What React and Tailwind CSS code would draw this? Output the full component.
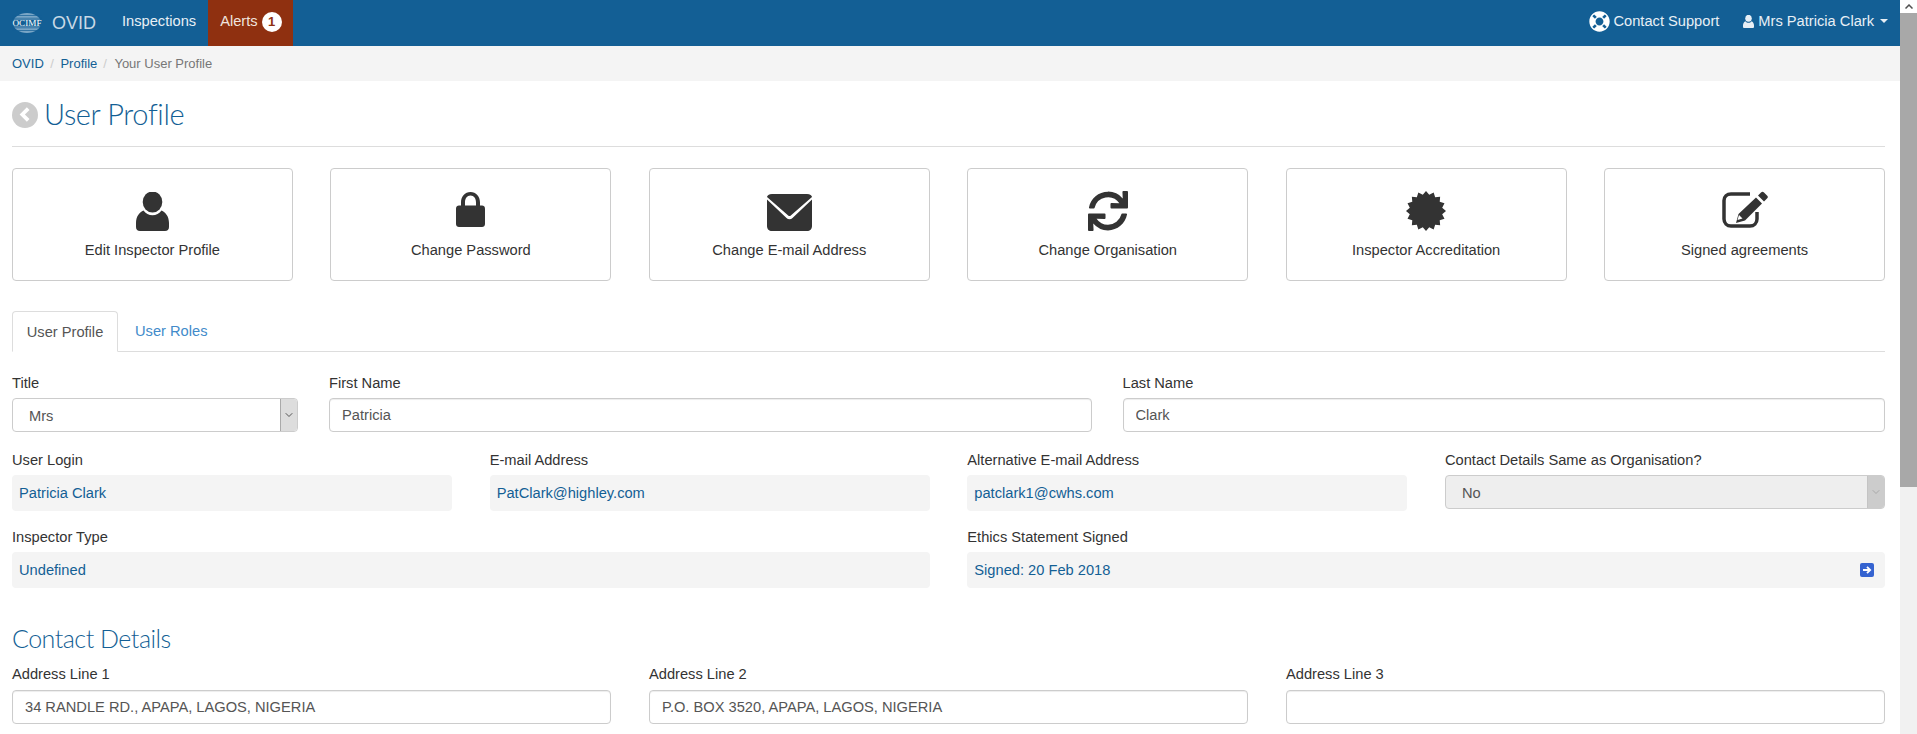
import { ChevronDown } from 'lucide-react';
import { FaLifeRing, FaSync } from 'react-icons/fa';

const UserIcon = ({ className }) => (
  <svg viewBox="0 0 33 39" className={className} fill="currentColor">
    <ellipse cx="16.5" cy="10" rx="9.8" ry="10.5" />
    <path d="M7.5 18.5c2 3 5.500 4.700 9 4.700s7-1.700 9-4.700c4 1.500 7.500 6 7.500 12.500v4c0 2.500-1.500 4-4 4H4c-2.500 0-4-1.500-4-4v-4c0-6.500 3.500-11 7.500-12.500z" />
  </svg>
);

const LockIcon = ({ className }) => (
  <svg viewBox="0 0 29 35" className={className} fill="currentColor">
    <path d="M3 13.500h23c1.700 0 3 1.200 3 3V32c0 1.700-1.300 3-3 3H3c-1.700 0-3-1.300-3-3V16.500c0-1.800 1.300-3 3-3z" />
    <path d="M5 15V10.500C5 4.500 9 0 14.500 0S24 4.500 24 10.500V15h-4V10.500C20 6.500 18 3.500 14.500 3.500S9 6.500 9 10.500V15z" />
  </svg>
);

const EnvelopeIcon = ({ className }) => (
  <svg viewBox="0 0 45 37" className={className} fill="currentColor">
    <path d="M0 5.500V32c0 3 2 5 5 5h35c3 0 5-2 5-5V5.500L25.500 24c-1.700 1.600-4.300 1.600-6 0z" />
    <path d="M5 0h35c3 0 5 1.500 5 3L23.800 21.500c-.8.700-1.800.700-2.600 0L0 3c0-1.500 2-3 5-3z" />
  </svg>
);

// 16 point seal, the teeth are worked out here rather than typed by hand
const sealPoints = Array.from({ length: 32 }, (_, i) => {
  const r = i % 2 === 0 ? 20 : 16.5;
  const a = (i * Math.PI) / 16;
  return `${20 + r * Math.sin(a)},${20 - r * Math.cos(a)}`;
}).join(' ');

const SealIcon = ({ className }) => (
  <svg viewBox="0 0 40 40" className={className} fill="currentColor">
    <polygon points={sealPoints} />
  </svg>
);

const EditIcon = ({ className }) => (
  <svg viewBox="0 0 46 37" className={className} fill="none">
    <path d="M28 3H9C5 3 2 5.500 2 9.500V28c0 4 3 7 7 7h19c4 0 7-3 7-7v-7" stroke="currentColor" strokeWidth="3.500" />
    <path d="M39 1.500a2 2 0 0 1 3 0l3 3a2 2 0 0 1 0 3l-3 3-6-6zM34 6.500l6 6-17 17-9 2.500 2.500-9z" fill="currentColor" />
    <path d="M17 24l-1.500 5 5-1.500z" fill="#fff" />
  </svg>
);

const OcimfLogo = () => (
  <svg viewBox="0 0 30 20" className="h-5 w-[30px]">
    <ellipse cx="15" cy="10" rx="14" ry="10" fill="#7aa6c6" />
    <path d="M0 2.500h30M0 5.200h30M0 14.800h30M0 17.500h30" stroke="#135f95" strokeWidth="0.700" />
    <rect x="0" y="6.500" width="30" height="7" fill="#135f95" />
    <text x="15" y="12.700" textAnchor="middle" fontSize="8.500" textLength="29" lengthAdjust="spacingAndGlyphs" fill="#fff" fontFamily="'Liberation Serif', serif">OCIMF</text>
  </svg>
);

const actions = [
  { label: 'Edit Inspector Profile', icon: <UserIcon className="h-[39px] w-[33px]" /> },
  { label: 'Change Password', icon: <LockIcon className="mb-1 h-[35px] w-[29px]" /> },
  { label: 'Change E-mail Address', icon: <EnvelopeIcon className="h-[37px] w-[45px]" /> },
  { label: 'Change Organisation', icon: <FaSync className="h-10 w-10" /> },
  { label: 'Inspector Accreditation', icon: <SealIcon className="h-10 w-10" /> },
  { label: 'Signed agreements', icon: <EditIcon className="mb-[3px] h-[37px] w-[46px]" /> },
];

const Label = ({ children }) => <label className="mb-[5.5px] block h-5 leading-5 text-[#333]">{children}</label>;

const TextField = ({ label, value }) => (
  <div>
    <Label>{label}</Label>
    <input
      readOnly
      value={value}
      className="h-[34px] w-full rounded border border-[#ccc] bg-white px-3 text-[#555] shadow-[inset_0_1px_1px_rgba(0,0,0,0.075)] outline-none"
    />
  </div>
);

const ReadOnlyField = ({ label, value, className, children }) => (
  <div className={className}>
    <Label>{label}</Label>
    <div className="flex h-9 items-center justify-between rounded bg-[#f4f4f4] pr-[11px] pl-[7px] text-[#135f95]">
      <span>{value}</span>
      {children}
    </div>
  </div>
);

const SelectField = ({ label, value, disabled }) => (
  <div>
    <Label>{label}</Label>
    <div className={`flex h-[34px] items-stretch overflow-hidden rounded border border-[#ccc] ${disabled ? 'bg-[#eee]' : 'bg-white'}`}>
      <span className="flex-1 pt-[6px] pl-[16px] text-[#555]">{value}</span>
      <span className={`flex w-[17px] items-center justify-center border-l ${disabled ? 'border-[#c4c4c4] bg-[#ccc] text-[#aaa]' : 'border-[#aaa] bg-[#ddd] text-[#555]'}`}>
        <ChevronDown size={12} />
      </span>
    </div>
  </div>
);

export default function App() {
  return (
    <div className="flex h-[734px] overflow-hidden bg-white text-[14.67px] [font-family:'Liberation_Sans',Arial,sans-serif]">
      <div className="min-w-0 flex-1">
        <header className="flex h-[46px] items-center justify-between bg-[#135f95] text-[#e8eff5]">
          <div className="flex h-full items-center">
            <div className="ml-3 flex items-center gap-[10px]">
              <OcimfLogo />
              <span className="text-[18px] text-[#c9d9e5]">OVID</span>
            </div>
            <a className="ml-[26px] -translate-y-[2px]">Inspections</a>
            <a className="ml-3 flex h-full items-center gap-1 bg-[#8f3010] pr-[11px] pl-3 text-[#f0e4df]">
              <span className="-translate-y-[2px]">Alerts</span>
              <span className="flex h-5 w-5 -translate-y-px items-center justify-center rounded-full bg-white text-[13px] font-bold text-[#8f3010]">1</span>
            </a>
          </div>
          <div className="flex -translate-y-[2px] items-center pr-[12px]">
            <a className="flex items-center gap-[3px]">
              <FaLifeRing className="h-[21px] w-[21px] text-white" />
              Contact Support
            </a>
            <a className="ml-[24px] flex items-center gap-1">
              <UserIcon className="h-[13px] w-[11px]" />
              Mrs Patricia Clark
              <span className="ml-[2px] h-0 w-0 border-x-4 border-t-4 border-x-transparent border-t-[#e8eff5]" />
            </a>
          </div>
        </header>

        <nav className="flex h-[35px] items-center bg-[#f4f4f4] pl-3 text-[13px]">
          <a className="text-[#135f95]">OVID</a>
          <span className="px-[6.5px] text-[#ccc]">/</span>
          <a className="text-[#135f95]">Profile</a>
          <span className="px-[6px] text-[#ccc]">/</span>
          <span className="pl-[1.5px] text-[#777]">Your User Profile</span>
        </nav>

        <main className="pr-[15px] pl-3">
          <div className="flex h-[66px] items-center gap-[6px] border-b border-[#ddd] pt-[2px]">
            <span className="flex h-[26px] w-[26px] items-center justify-center rounded-full bg-[#ccc]">
              <svg viewBox="0 0 14 14" className="h-[15px] w-[15px]" fill="none" stroke="#fff" strokeWidth="3.500">
                <path d="M9.500 1.500L4 7l5.500 5.500" />
              </svg>
            </span>
            <h1 className="-translate-y-px text-[29px] font-light tracking-[-0.4px] text-[#135f95] [font-family:'Lato',sans-serif]">User Profile</h1>
          </div>

          <div className="mt-[21px] grid grid-cols-6 gap-x-[37.6px]">
            {actions.map((item) => (
              <button key={item.label} className="flex h-[113px] flex-col items-center rounded border border-[#ccc] bg-white pt-[21px] text-[#333]">
                <span className="flex h-[41px] items-end text-[#333]">{item.icon}</span>
                <span className="mt-[8px]">{item.label}</span>
              </button>
            ))}
          </div>

          <div className="mt-[30px] flex h-[41px] border-b border-[#ddd]">
            <a className="-mb-px flex h-[41px] w-[106px] items-center justify-center rounded-t border border-[#ddd] border-b-white bg-white text-[#555]">User Profile</a>
            <a className="ml-[17px] flex items-center text-[#428bca]">User Roles</a>
          </div>

          <div className="mt-[20.5px] grid grid-cols-[286px_1fr_1fr] gap-x-[31px]">
            <SelectField label="Title" value="Mrs" />
            <TextField label="First Name" value="Patricia" />
            <TextField label="Last Name" value="Clark" />
          </div>

          <div className="mt-[17.5px] grid grid-cols-4 gap-x-[37.6px] gap-y-[15.5px]">
            <ReadOnlyField label="User Login" value="Patricia Clark" />
            <ReadOnlyField label="E-mail Address" value="PatClark@highley.com" />
            <ReadOnlyField label="Alternative E-mail Address" value="patclark1@cwhs.com" />
            <SelectField label="Contact Details Same as Organisation?" value="No" disabled />
            <ReadOnlyField className="col-span-2" label="Inspector Type" value="Undefined" />
            <ReadOnlyField className="col-span-2" label="Ethics Statement Signed" value="Signed: 20 Feb 2018">
              <span className="flex h-[14px] w-[14px] items-center justify-center rounded-[2px] bg-[#3563d0]">
                <svg viewBox="0 0 10 10" className="h-[10px] w-[10px]" fill="none" stroke="#fff" strokeWidth="1.800">
                  <path d="M1 5h7M5 1.800L8.200 5 5 8.200" />
                </svg>
              </span>
            </ReadOnlyField>
          </div>

          <h2 className="mt-[33px] h-[34px] text-[25px] leading-[34px] font-light tracking-[-0.5px] text-[#135f95] [font-family:'Lato',sans-serif]">Contact Details</h2>

          <div className="mt-[9.2px] grid grid-cols-3 gap-x-[38px]">
            <TextField label="Address Line 1" value="34 RANDLE RD., APAPA, LAGOS, NIGERIA" />
            <TextField label="Address Line 2" value="P.O. BOX 3520, APAPA, LAGOS, NIGERIA" />
            <TextField label="Address Line 3" value="" />
          </div>
        </main>
      </div>

      {/* window scrollbar from the screenshot */}
      <aside className="flex w-[17px] shrink-0 flex-col bg-[#f1f1f1]">
        <div className="flex h-[13px] items-center justify-center bg-white text-[#505050]">
          <svg viewBox="0 0 8 5" className="h-[5px] w-2" fill="none" stroke="currentColor" strokeWidth="1.500">
            <path d="M.5 4.500L4 1l3.500 3.500" />
          </svg>
        </div>
        <div className="h-[474px] bg-[#a8a8a8]" />
      </aside>
    </div>
  );
}
